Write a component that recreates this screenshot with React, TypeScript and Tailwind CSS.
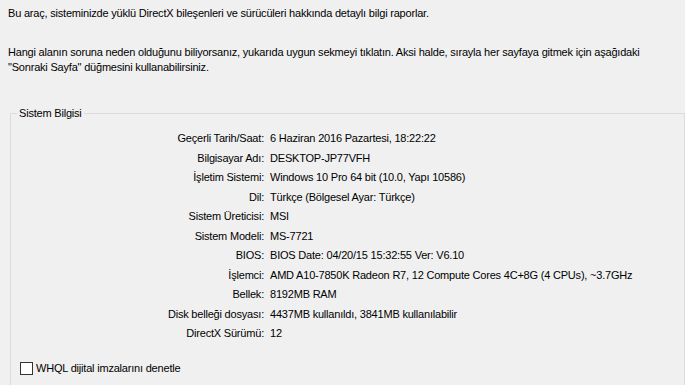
import React from 'react';

const rows: [string, string][] = [
  ['Geçerli Tarih/Saat:', '6 Haziran 2016 Pazartesi, 18:22:22'],
  ['Bilgisayar Adı:', 'DESKTOP-JP77VFH'],
  ['İşletim Sistemi:', 'Windows 10 Pro 64 bit (10.0, Yapı 10586)'],
  ['Dil:', 'Türkçe (Bölgesel Ayar: Türkçe)'],
  ['Sistem Üreticisi:', 'MSI'],
  ['Sistem Modeli:', 'MS-7721'],
  ['BIOS:', 'BIOS Date: 04/20/15 15:32:55 Ver: V6.10'],
  ['İşlemci:', 'AMD A10-7850K Radeon R7, 12 Compute Cores 4C+8G (4 CPUs), ~3.7GHz'],
  ['Bellek:', '8192MB RAM'],
  ['Disk belleği dosyası:', '4437MB kullanıldı, 3841MB kullanılabilir'],
  ['DirectX Sürümü:', '12'],
];

export default function App() {
  return (
    <div
      className="w-[685px] h-[385px] overflow-hidden bg-[#f0f0f0] text-[11px] leading-[15px] tracking-[-0.2px] text-black"
      style={{ fontFamily: '"Liberation Sans", Arial, sans-serif' }}
    >
      <div className="pl-[8px] pt-[6px] whitespace-nowrap">
        <p>Bu araç, sisteminizde yüklü DirectX bileşenleri ve sürücüleri hakkında detaylı bilgi raporlar.</p>
        <p className="mt-[24px]">
          Hangi alanın soruna neden olduğunu biliyorsanız, yukarıda uygun sekmeyi tıklatın. Aksi halde, sırayla her sayfaya gitmek için aşağıdaki
          <br />
          "Sonraki Sayfa" düğmesini kullanabilirsiniz.
        </p>
      </div>

      <div className="relative ml-[10px] mt-[38px] h-[300px] border-l border-t border-r border-[#dcdcdc]">
        <span className="absolute left-[6px] top-[-8px] bg-[#f0f0f0] px-[2px]">Sistem Bilgisi</span>

        <div className="pt-[15px]">
          {rows.map(([label, value]) => (
            <div key={label} className="flex h-[19.5px] items-center">
              <div className="w-[253px] shrink-0 text-right">{label}</div>
              <div className="pl-[6px] whitespace-nowrap">{value}</div>
            </div>
          ))}
        </div>

        <div className="mt-[17px] flex items-center pl-[9px]">
          <div className="h-[13px] w-[13px] border border-[#333333] bg-white" />
          <span className="ml-[3px]">WHQL dijital imzalarını denetle</span>
        </div>
      </div>
    </div>
  );
}
